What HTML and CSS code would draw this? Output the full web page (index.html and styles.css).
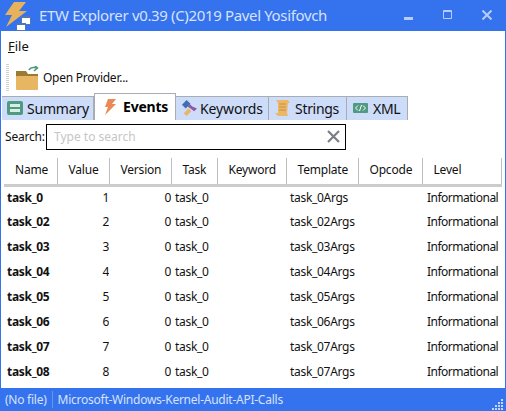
FILE: index.html
```html
<!DOCTYPE html>
<html lang="en">
<head>
    <meta charset="UTF-8">
    <meta name="viewport" content="width=device-width, initial-scale=1.0">
    <title>ETW Explorer</title>
    <link rel="stylesheet" href="styles.css">
</head>
<body>
    <div class="window">
        <div class="titlebar">
            <svg class="app-icon" width="32" height="31" viewBox="0 0 32 31">
                <path d="M14 2H26L19 11H27L6 27L12 15H5Z" fill="#e8b25c"/>
                <rect x="21" y="16" width="10" height="9" fill="#4f77b8"/>
                <rect x="22" y="18" width="8" height="6" fill="#fff"/>
                <rect x="16" y="23" width="10" height="8" fill="#4f77b8"/>
                <rect x="17" y="25" width="8" height="5" fill="#fff"/>
            </svg>
            <span class="title">ETW Explorer v0.39 (C)2019 Pavel Yosifovch</span>
            <div class="controls">
                <svg width="10" height="10" viewBox="0 0 10 10"><rect x="0" y="7" width="9" height="3" fill="#b8cdf6"/></svg>
                <svg width="10" height="10" viewBox="0 0 10 10"><path d="M.5 .5H8.5V8.5H.5ZM.5 1.5H8.5" fill="none" stroke="#b8cdf6"/></svg>
                <svg width="10" height="10" viewBox="0 0 10 10"><path d="M.5 .5L9.5 9.5M9.5 .5L.5 9.5" fill="none" stroke="#b8cdf6" stroke-width="2"/></svg>
            </div>
        </div>

        <div class="content">
            <div class="menu"><span><u>F</u>ile</span></div>

            <div class="toolbar">
                <div class="grip"></div>
                <svg width="23" height="24" viewBox="0 0 23 24">
                    <path d="M0 5H10L12 8H22V12H0Z" fill="#9a7a35"/>
                    <rect x="0" y="10" width="22" height="14" rx="1" fill="#e8b563"/>
                    <path d="M13 4C14 2 17 1 21 2M18 -1L21.5 2L18 5" fill="none" stroke="#4f9a80" stroke-width="1.6"/>
                </svg>
                <span>Open Provider...</span>
            </div>

            <div class="tabs">
                <div class="tab tab-summary">
                    <svg width="16" height="14" viewBox="0 0 16 14">
                        <rect width="16" height="14" rx="2" fill="#4f9a80"/>
                        <rect x="3" y="3" width="10" height="3" fill="#d9efe6"/>
                        <rect x="3" y="8" width="10" height="3" fill="#d9efe6"/>
                    </svg>
                    Summary
                </div>
                <div class="tab tab-events active">
                    <svg width="13" height="16" viewBox="0 0 13 16">
                        <path d="M4 0H12L8 5H12L1 16L4 8H1Z" fill="#e98a56"/>
                    </svg>
                    Events
                </div>
                <div class="tab tab-keywords">
                    <svg width="16" height="16" viewBox="0 0 17 17">
                        <path d="M6 0L10 4L5 9L1 5Z" fill="#3f6fb0"/>
                        <path d="M9 4L12 7L17 9L14 12L10 9L7 7Z" fill="#8f5aa5"/>
                        <path d="M8 9L11 12L6 17L3 14Z" fill="#e8b563"/>
                    </svg>
                    Keywords
                </div>
                <div class="tab tab-strings">
                    <svg width="15" height="16" viewBox="0 0 15 16">
                        <path d="M1 0H13L15 3H13L12 13L13 16H3L0 13H3L3 3Z" fill="#ecb767"/>
                        <path d="M4 4H11M4 7H11M4 10H11" stroke="#c98f3e"/>
                    </svg>
                    Strings
                </div>
                <div class="tab tab-xml">
                    <svg width="15" height="10" viewBox="0 0 15 10">
                        <rect width="15" height="10" rx="1" fill="#4f9a80"/>
                        <path d="M5 2.5L2.5 5L5 7.5M10 2.5L12.5 5L10 7.5M8.5 2L6.5 8" fill="none" stroke="#fff"/>
                    </svg>
                    XML
                </div>
            </div>

            <div class="search">
                <label>Search:</label>
                <div class="search-box">
                    <span class="placeholder">Type to search</span>
                    <svg width="13" height="13" viewBox="0 0 13 13"><path d="M1 1L12 12M12 1L1 12" stroke="#7b7f85" stroke-width="2.2"/></svg>
                </div>
            </div>

            <table class="events">
                <colgroup>
                    <col class="col-name"><col class="col-value"><col class="col-version"><col class="col-task">
                    <col class="col-keyword"><col class="col-template"><col class="col-opcode"><col class="col-level">
                </colgroup>
                <thead>
                    <tr><th>Name</th><th>Value</th><th>Version</th><th>Task</th><th>Keyword</th><th>Template</th><th>Opcode</th><th>Level</th></tr>
                </thead>
                <tbody>
                    <tr><td class="name">task_0</td><td class="num">1</td><td class="num">0</td><td>task_0</td><td></td><td>task_0Args</td><td></td><td class="level">Informational</td></tr>
                    <tr><td class="name">task_02</td><td class="num">2</td><td class="num">0</td><td>task_0</td><td></td><td>task_02Args</td><td></td><td class="level">Informational</td></tr>
                    <tr><td class="name">task_03</td><td class="num">3</td><td class="num">0</td><td>task_0</td><td></td><td>task_03Args</td><td></td><td class="level">Informational</td></tr>
                    <tr><td class="name">task_04</td><td class="num">4</td><td class="num">0</td><td>task_0</td><td></td><td>task_04Args</td><td></td><td class="level">Informational</td></tr>
                    <tr><td class="name">task_05</td><td class="num">5</td><td class="num">0</td><td>task_0</td><td></td><td>task_05Args</td><td></td><td class="level">Informational</td></tr>
                    <tr><td class="name">task_06</td><td class="num">6</td><td class="num">0</td><td>task_0</td><td></td><td>task_06Args</td><td></td><td class="level">Informational</td></tr>
                    <tr><td class="name">task_07</td><td class="num">7</td><td class="num">0</td><td>task_0</td><td></td><td>task_07Args</td><td></td><td class="level">Informational</td></tr>
                    <tr><td class="name">task_08</td><td class="num">8</td><td class="num">0</td><td>task_0</td><td></td><td>task_07Args</td><td></td><td class="level">Informational</td></tr>
                </tbody>
            </table>
        </div>

        <div class="statusbar">
            <span class="status-file">(No file)</span>
            <span class="status-provider">Microsoft-Windows-Kernel-Audit-API-Calls</span>
            <svg class="resize-grip" width="12" height="12" viewBox="0 0 12 12" fill="#c3d5f8">
                <rect x="9" y="1" width="2" height="2"/>
                <rect x="6" y="4" width="2" height="2"/><rect x="9" y="4" width="2" height="2"/>
                <rect x="3" y="7" width="2" height="2"/><rect x="6" y="7" width="2" height="2"/><rect x="9" y="7" width="2" height="2"/>
                <rect x="0" y="10" width="2" height="2"/><rect x="3" y="10" width="2" height="2"/><rect x="6" y="10" width="2" height="2"/><rect x="9" y="10" width="2" height="2"/>
            </svg>
        </div>
    </div>
</body>
</html>
```
FILE: styles.css
```css
* {
    box-sizing: border-box;
}
html, body {
    margin: 0;
    height: 100%;
    overflow: hidden;
}
body {
    font-family: "Noto Sans", "Open Sans", sans-serif;
    font-size: 12px;
    color: #111;
    background: #fff;
}
.window {
    display: flex;
    flex-direction: column;
    height: 411px;
    border: solid #3572ee;
    border-width: 0 1px;
}
.titlebar {
    display: flex;
    align-items: center;
    height: 31px;
    margin: 0 -1px;
    background: #3572ee;
    flex: none;
}
.app-icon {
    flex: none;
    margin-right: 7px;
}
.title {
    padding-bottom: 2px;
    font-size: 15px;
    letter-spacing: -0.35px;
    color: #d6e2fb;
    white-space: nowrap;
}
.controls {
    display: flex;
    gap: 29px;
    margin-left: auto;
    margin-right: 14px;
    padding-bottom: 2px;
}
.content {
    flex: 1;
    min-height: 0;
}
.menu {
    height: 31px;
    padding: 6px 0 0 7px;
    font-size: 13px;
}
.toolbar {
    display: flex;
    align-items: center;
    height: 31px;
    padding-left: 5px;
    gap: 4px;
    font-size: 12px;
    letter-spacing: -0.25px;
}
.grip {
    width: 3px;
    height: 27px;
    margin-right: 3px;
    background: repeating-linear-gradient(#d0d0d0 0 1px, #fff 1px 2px);
}
.tabs {
    display: flex;
    align-items: flex-end;
    height: 27px;
    padding-left: 1px;
}
.tab {
    display: flex;
    align-items: center;
    gap: 4px;
    height: 24px;
    padding-left: 5px;
    padding-bottom: 1px;
    background: #cddcf9;
    border: solid #a9acb2;
    border-width: 1px 1px 0 0;
    font-size: 14px;
    letter-spacing: -0.2px;
    white-space: nowrap;
}
.tab.active {
    height: 27px;
    background: #fff;
    border-width: 1px 1px 0 1px;
    font-weight: bold;
    color: #000;
}
.tab-summary { width: 92px; }
.tab-events { width: 82px; padding-left: 9px; gap: 6px; }
.tab-keywords { width: 93px; gap: 3px; letter-spacing: -0.1px; }
.tab-strings { width: 78px; padding-left: 6px; gap: 5px; letter-spacing: -0.3px; }
.tab-xml { width: 61px; padding-left: 6px; gap: 5px; letter-spacing: -0.3px; }
.search {
    display: flex;
    align-items: center;
    height: 30px;
    padding: 3px 0 0 4px;
}
.search label {
    width: 41px;
    flex: none;
    letter-spacing: -0.2px;
}
.search-box {
    display: flex;
    align-items: center;
    justify-content: space-between;
    width: 300px;
    height: 26px;
    padding: 0 5px 0 7px;
    border: 1px solid #000;
}
.placeholder {
    color: #c6c6c6;
}
.events {
    table-layout: fixed;
    border-collapse: collapse;
    width: 497px;
    margin: 8px 0 0 3px;
}
.col-name { width: 53px; }
.col-value { width: 52px; }
.col-version { width: 62px; }
.col-task { width: 46px; }
.col-keyword { width: 69px; }
.col-template { width: 72px; }
.col-opcode { width: 64px; }
.col-level { width: 79px; }
.events th {
    height: 27px;
    padding: 0 0 2px 11px;
    text-align: left;
    font-weight: normal;
    white-space: nowrap;
    letter-spacing: -0.2px;
    border-right: 1px solid #bdbdbd;
    border-bottom: 3px solid #ccc;
}
.events td {
    height: 25px;
    padding: 0 0 2px 4px;
    white-space: nowrap;
    letter-spacing: -0.3px;
    overflow: hidden;
}
.events td.name {
    padding-left: 3px;
    font-weight: bold;
}
.events td.num {
    padding-left: 0;
    text-align: right;
}
.events td.level {
    padding-left: 5px;
    letter-spacing: -0.5px;
}
.statusbar {
    position: relative;
    display: flex;
    align-items: center;
    height: 23px;
    margin: 0 -1px;
    padding-left: 5px;
    padding-bottom: 1px;
    flex: none;
    background: #3572ee;
    color: #d6e2fb;
    letter-spacing: -0.25px;
}
.status-file {
    padding-right: 5px;
    margin-right: 5px;
    border-right: 1px solid #6d93e2;
}
.resize-grip {
    position: absolute;
    right: 2px;
    bottom: 1px;
}
```
